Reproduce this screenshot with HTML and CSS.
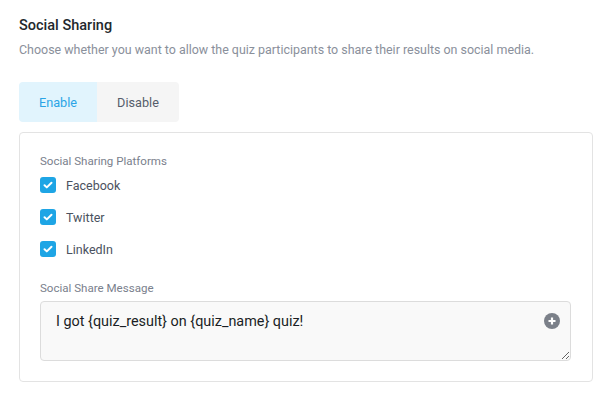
FILE: index.html
```html
<!DOCTYPE html>
<html>
<head>
<meta charset="utf-8">
<link rel="stylesheet" href="styles.css">
</head>
<body>
<div class="page">
  <h2 class="title">Social Sharing</h2>
  <p class="desc">Choose whether you want to allow the quiz participants to share their results on social media.</p>
  <div class="toggle">
    <button class="opt active">Enable</button>
    <button class="opt">Disable</button>
  </div>
  <div class="card">
    <div class="label">Social Sharing Platforms</div>
    <ul class="checks">
      <li class="check"><span class="box"><svg viewBox="0 0 16 16" width="16" height="16"><path d="M4.5 8.2l2.3 2.2 4.7-4.6" fill="none" stroke="#fff" stroke-width="2" stroke-linecap="round" stroke-linejoin="round"/></svg></span>Facebook</li>
      <li class="check"><span class="box"><svg viewBox="0 0 16 16" width="16" height="16"><path d="M4.5 8.2l2.3 2.2 4.7-4.6" fill="none" stroke="#fff" stroke-width="2" stroke-linecap="round" stroke-linejoin="round"/></svg></span>Twitter</li>
      <li class="check"><span class="box"><svg viewBox="0 0 16 16" width="16" height="16"><path d="M4.5 8.2l2.3 2.2 4.7-4.6" fill="none" stroke="#fff" stroke-width="2" stroke-linecap="round" stroke-linejoin="round"/></svg></span>LinkedIn</li>
    </ul>
    <div class="label label2">Social Share Message</div>
    <div class="msgwrap">
      <textarea class="msg">I got {quiz_result} on {quiz_name} quiz!</textarea>
      <span class="plus"><svg viewBox="0 0 16 16" width="16" height="16"><circle cx="8" cy="8" r="8" fill="#7b8089"/><path d="M8 4.5v7M4.5 8h7" stroke="#fff" stroke-width="2.2"/></svg></span>
    </div>
  </div>
</div>
</body>
</html>
```
FILE: styles.css
```css
* { box-sizing: border-box; }
body {
  margin: 0;
  background: #fff;
  font-family: Roboto, "Liberation Sans", sans-serif;
}
.page {
  padding: 16px 17px 0 19px;
  width: 610px;
}
.title {
  margin: 0;
  font-size: 14.5px;
  font-weight: 500;
  color: #23282d;
  line-height: 20px;
}
.desc {
  margin: 5px 0 0;
  font-size: 12.45px;
  color: #8a909b;
  line-height: 18px;
}
.toggle {
  display: flex;
  margin-top: 23px;
  width: 160px;
  height: 40px;
  border-radius: 4px;
  overflow: hidden;
}
.opt {
  border: 0;
  margin: 0;
  padding: 0;
  font-family: inherit;
  font-size: 12.7px;
  color: #555d6b;
  background: #f5f5f5;
  height: 40px;
  width: 82px;
}
.opt.active {
  width: 78px;
  background: #e1f4fd;
  color: #2aa4e6;
}
.card {
  margin-top: 10px;
  width: 574px;
  height: 250px;
  border: 1px solid #e3e3e3;
  border-radius: 4px;
  padding: 20px 20px 0 20px;
}
.label {
  font-size: 11.55px;
  color: #7a808c;
  line-height: 16px;
}
.checks {
  list-style: none;
  margin: 0;
  padding: 0;
}
.check {
  display: flex;
  align-items: center;
  height: 32px;
  font-size: 12.5px;
  color: #4b5260;
}
.box {
  width: 16px;
  height: 16px;
  border-radius: 3px;
  background: #1ea5e5;
  margin-right: 10px;
  display: flex;
}
.label2 { margin-top: 15px; }
.msgwrap {
  position: relative;
  margin-top: 5px;
  width: 531px;
  height: 60px;
}
.msg {
  display: block;
  width: 100%;
  height: 100%;
  resize: vertical;
  background: #f9f9f9;
  border: 1px solid #dcdcdc;
  border-radius: 4px;
  padding: 10px 15px;
  font-family: inherit;
  font-size: 14.4px;
  color: #1a1e24;
  line-height: 20px;
}
.plus {
  position: absolute;
  right: 11px;
  top: 12px;
  width: 16px;
  height: 16px;
  display: flex;
}
```
